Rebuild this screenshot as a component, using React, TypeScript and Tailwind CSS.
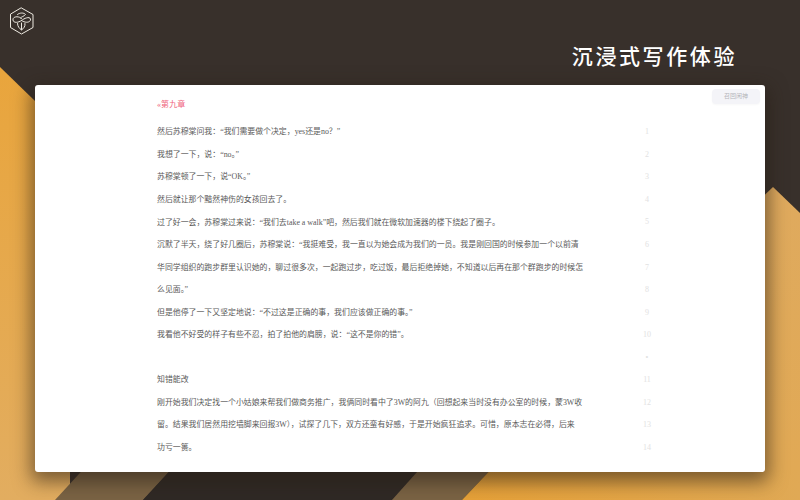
const rows: { t: string; n: string }[] = [
  { t: "然后苏穆棠问我：“我们需要做个决定，yes还是no？”", n: "1" },
  { t: "我想了一下，说：“no。”", n: "2" },
  { t: "苏穆棠顿了一下，说“OK。”", n: "3" },
  { t: "然后就让那个黯然神伤的女孩回去了。", n: "4" },
  { t: "过了好一会，苏穆棠过来说：“我们去take a walk”吧，然后我们就在微软加速器的楼下绕起了圈子。", n: "5" },
  { t: "沉默了半天，绕了好几圈后，苏穆棠说：“我挺难受，我一直以为她会成为我们的一员。我是刚回国的时候参加一个以前清", n: "6" },
  { t: "华同学组织的跑步群里认识她的，聊过很多次，一起跑过步，吃过饭，最后拒绝掉她，不知道以后再在那个群跑步的时候怎", n: "7" },
  { t: "么见面。”", n: "8" },
  { t: "但是他停了一下又坚定地说：“不过这是正确的事，我们应该做正确的事。”", n: "9" },
  { t: "我看他不好受的样子有些不忍，拍了拍他的肩膀，说：“这不是你的错”。", n: "10" },
  { t: "", n: "•" },
  { t: "知错能改", n: "11" },
  { t: "刚开始我们决定找一个小姑娘来帮我们做商务推广，我俩同时看中了3W的阿九（回想起来当时没有办公室的时候，蒙3W收", n: "12" },
  { t: "留。结果我们居然用挖墙脚来回报3W），试探了几下，双方还蛮有好感，于是开始疯狂追求。可惜，原本志在必得，后来", n: "13" },
  { t: "功亏一篑。", n: "14" },
];

export default function App() {
  return (
    <div className="relative w-[800px] h-[500px] overflow-hidden bg-[#38302b] font-['Liberation_Serif','Noto_Sans_CJK_SC',serif]">
      <svg className="absolute inset-0" width="800" height="500" viewBox="0 0 800 500">
        <defs>
          <linearGradient id="orangeV" x1="0" y1="0" x2="0" y2="1">
            <stop offset="0" stopColor="#e9a53c" />
            <stop offset="1" stopColor="#e2ad60" />
          </linearGradient>
          <linearGradient id="orangeR" x1="0" y1="0" x2="0" y2="1">
            <stop offset="0" stopColor="#dfaa5e" />
            <stop offset="1" stopColor="#e1a955" />
          </linearGradient>
          <linearGradient id="orangeB" x1="0" y1="0" x2="1" y2="0">
            <stop offset="0" stopColor="#e6a138" />
            <stop offset="1" stopColor="#e0a955" />
          </linearGradient>
        </defs>
        <polygon points="0,67 70,135 70,500 0,500" fill="url(#orangeV)" />
        <polygon points="55,500 90,462 178,462 143,500" fill="#7a6344" />
        <polygon points="143,500 178,462 426,462 392,500" fill="#2f2925" />
        <polygon points="392,500 426,462 498,462 462,500" fill="#7a6344" />
        <polygon points="462,500 498,462 800,462 800,500" fill="url(#orangeB)" />
        <polygon points="773,187 800,213 800,470 700,470 700,257" fill="url(#orangeR)" />
      </svg>

      <div className="relative flex h-[85px] justify-between">
        <svg className="ml-[9px] mt-[7px]" width="26" height="28" viewBox="0 0 26 28" fill="none" stroke="#eeeae2" strokeWidth="1" strokeLinecap="round">
          <polygon points="12.5,1 24,7.5 24,20.5 12.5,27 1.5,20.5 1.5,7.5" />
          <path d="M12.5 11.5 C9.5 8.5 3.5 9.5 4 13 C4.5 16.5 9.5 15.5 12.5 13.5 C15 11.5 20.5 9 21.5 12 C22 15.5 16.5 16.5 12.5 13.5" />
          <path d="M8.5 7.5 C10.5 5.5 15 5.5 16.5 7.5 C15 9.5 12.5 9.5 11.5 11" />
          <path d="M8.5 16.5 C8.5 19.5 10.5 21.5 12.5 23 C14.5 21.5 16.5 19.5 16 16.5" />
          <path d="M12.5 16 L12.5 22.5" />
        </svg>
        <h1 className="mr-[63px] mt-[41px] h-[28px] text-[21px] leading-[28px] tracking-[2.6px] font-medium text-white font-['Noto_Sans_CJK_SC',sans-serif]">
          沉浸式写作体验
        </h1>
      </div>

      <main className="relative ml-[35px] w-[730px] h-[387px] rounded-[3px] bg-white pl-[122px] pt-[9px] shadow-[0_6px_18px_4px_rgba(40,30,20,0.55)]">
        <button className="absolute right-[5px] top-[4px] h-[15px] w-[48px] rounded-[4px] bg-[#f4f4f8] text-[6px] leading-[15px] text-[#b4b4ba] shadow-[0_1px_2px_rgba(0,0,0,0.03)]">
          召回闲神
        </button>
        <h2 className="h-[21px] text-[8px] leading-[21px] tracking-[0.09px] text-[#ef5f7c]">«第九章</h2>
        <div className="mt-[6px] flex flex-col">
          {rows.map((r) => (
            <div key={r.n} className="flex h-[22.55px] items-center text-[7.9px] leading-none">
              <p className="w-[484px] whitespace-nowrap text-[#5a5a5a]">{r.t}</p>
              <span className="w-[12px] text-center text-[8px] text-[#e2e2e2]">{r.n}</span>
            </div>
          ))}
        </div>
      </main>
    </div>
  );
}
